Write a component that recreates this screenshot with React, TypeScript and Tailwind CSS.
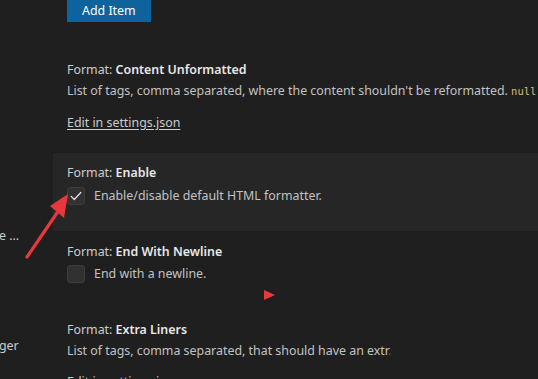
import React from 'react';

const Title: React.FC<{ name: string }> = ({ name }) => (
  <div className="h-[18px] leading-[18px] text-[#cccccc]">
    Format: <span className="font-semibold text-[#e7e7e7]">{name}</span>
  </div>
);

const Check: React.FC<{ checked?: boolean }> = ({ checked }) => (
  <div className="w-[18px] h-[18px] shrink-0 rounded-[3px] bg-[#313131] border border-[#3c3c3c] flex items-center justify-center">
    {checked && (
      <svg width="14" height="14" viewBox="0 0 16 16" fill="none">
        <path d="M2.5 8.5 L6 12 L13.5 4" stroke="#e6e6e6" strokeWidth="1.4" strokeLinecap="round" strokeLinejoin="round" />
      </svg>
    )}
  </div>
);

export default function App() {
  return (
    <div
      className="relative w-[538px] h-[379px] overflow-hidden bg-[#1f1f1f] text-[12.4px] text-[#cccccc] flex"
      style={{ fontFamily: '"Noto Sans", "Open Sans", sans-serif' }}
    >
      {/* table of contents, cut off at the left */}
      <div className="w-[54px] shrink-0 flex flex-col text-[#cccccc] -ml-[1px]">
        <div className="mt-[227px] h-[18px] leading-[18px] whitespace-nowrap">e ...</div>
        <div className="mt-[92px] h-[18px] leading-[18px] whitespace-nowrap">ger</div>
      </div>

      <div className="flex-1 flex flex-col">
        <div className="pl-[14px]">
          <button className="h-[22px] px-[15px] bg-[#0e639c] text-white leading-[22px]">Add Item</button>
        </div>

        {/* Content Unformatted */}
        <div className="pl-[14px] pt-[39px] pb-[21px]">
          <Title name="Content Unformatted" />
          <div className="mt-[3px] h-[18px] leading-[18px] whitespace-nowrap text-[#c2c2c2]">
            List of tags, comma separated, where the content shouldn't be reformatted.{' '}
            <span className="text-[#d7ba7d] text-[10.5px]" style={{ fontFamily: '"DejaVu Sans Mono", monospace' }}>null</span>{' '}
            <span className="text-[#c2c2c2]">should</span>
          </div>
          <div className="mt-[14px] h-[18px] leading-[18px] underline underline-offset-2 text-[#cccccc]">Edit in settings.json</div>
        </div>

        {/* Enable (focused row) */}
        <div className="pl-[14px] pt-[11px] pb-[26px] bg-[#262626]">
          <Title name="Enable" />
          <div className="mt-[5px] flex items-center gap-[9px]">
            <Check checked />
            <span className="leading-[18px] text-[#c2c2c2]">Enable/disable default HTML formatter.</span>
          </div>
        </div>

        {/* End With Newline */}
        <div className="pl-[14px] pt-[12px] pb-[27px]">
          <Title name="End With Newline" />
          <div className="mt-[4px] flex items-center gap-[9px]">
            <Check />
            <span className="leading-[18px] text-[#c2c2c2]">End with a newline.</span>
          </div>
        </div>

        {/* Extra Liners */}
        <div className="pl-[14px] pt-[11px]">
          <Title name="Extra Liners" />
          <div className="mt-[3px] h-[18px] leading-[18px] whitespace-nowrap text-[#c2c2c2]">
            List of tags, comma separated, that should have an extr<span className="text-[#555555]">.</span>
          </div>
          <div className="mt-[13px] h-[18px] leading-[18px] underline text-[#cccccc]">Edit in settings.json</div>
        </div>
      </div>

      {/* annotation arrow */}
      <svg className="absolute left-0 top-0 pointer-events-none" width="538" height="379">
        <line x1="27" y1="257" x2="57" y2="213" stroke="#e8383d" strokeWidth="3.2" strokeLinecap="round" />
        <polygon points="68,194 50,206 64,218" fill="#e8383d" />
        <polygon points="264,290 275,295 264,300" fill="#e8383d" />
      </svg>
    </div>
  );
}
